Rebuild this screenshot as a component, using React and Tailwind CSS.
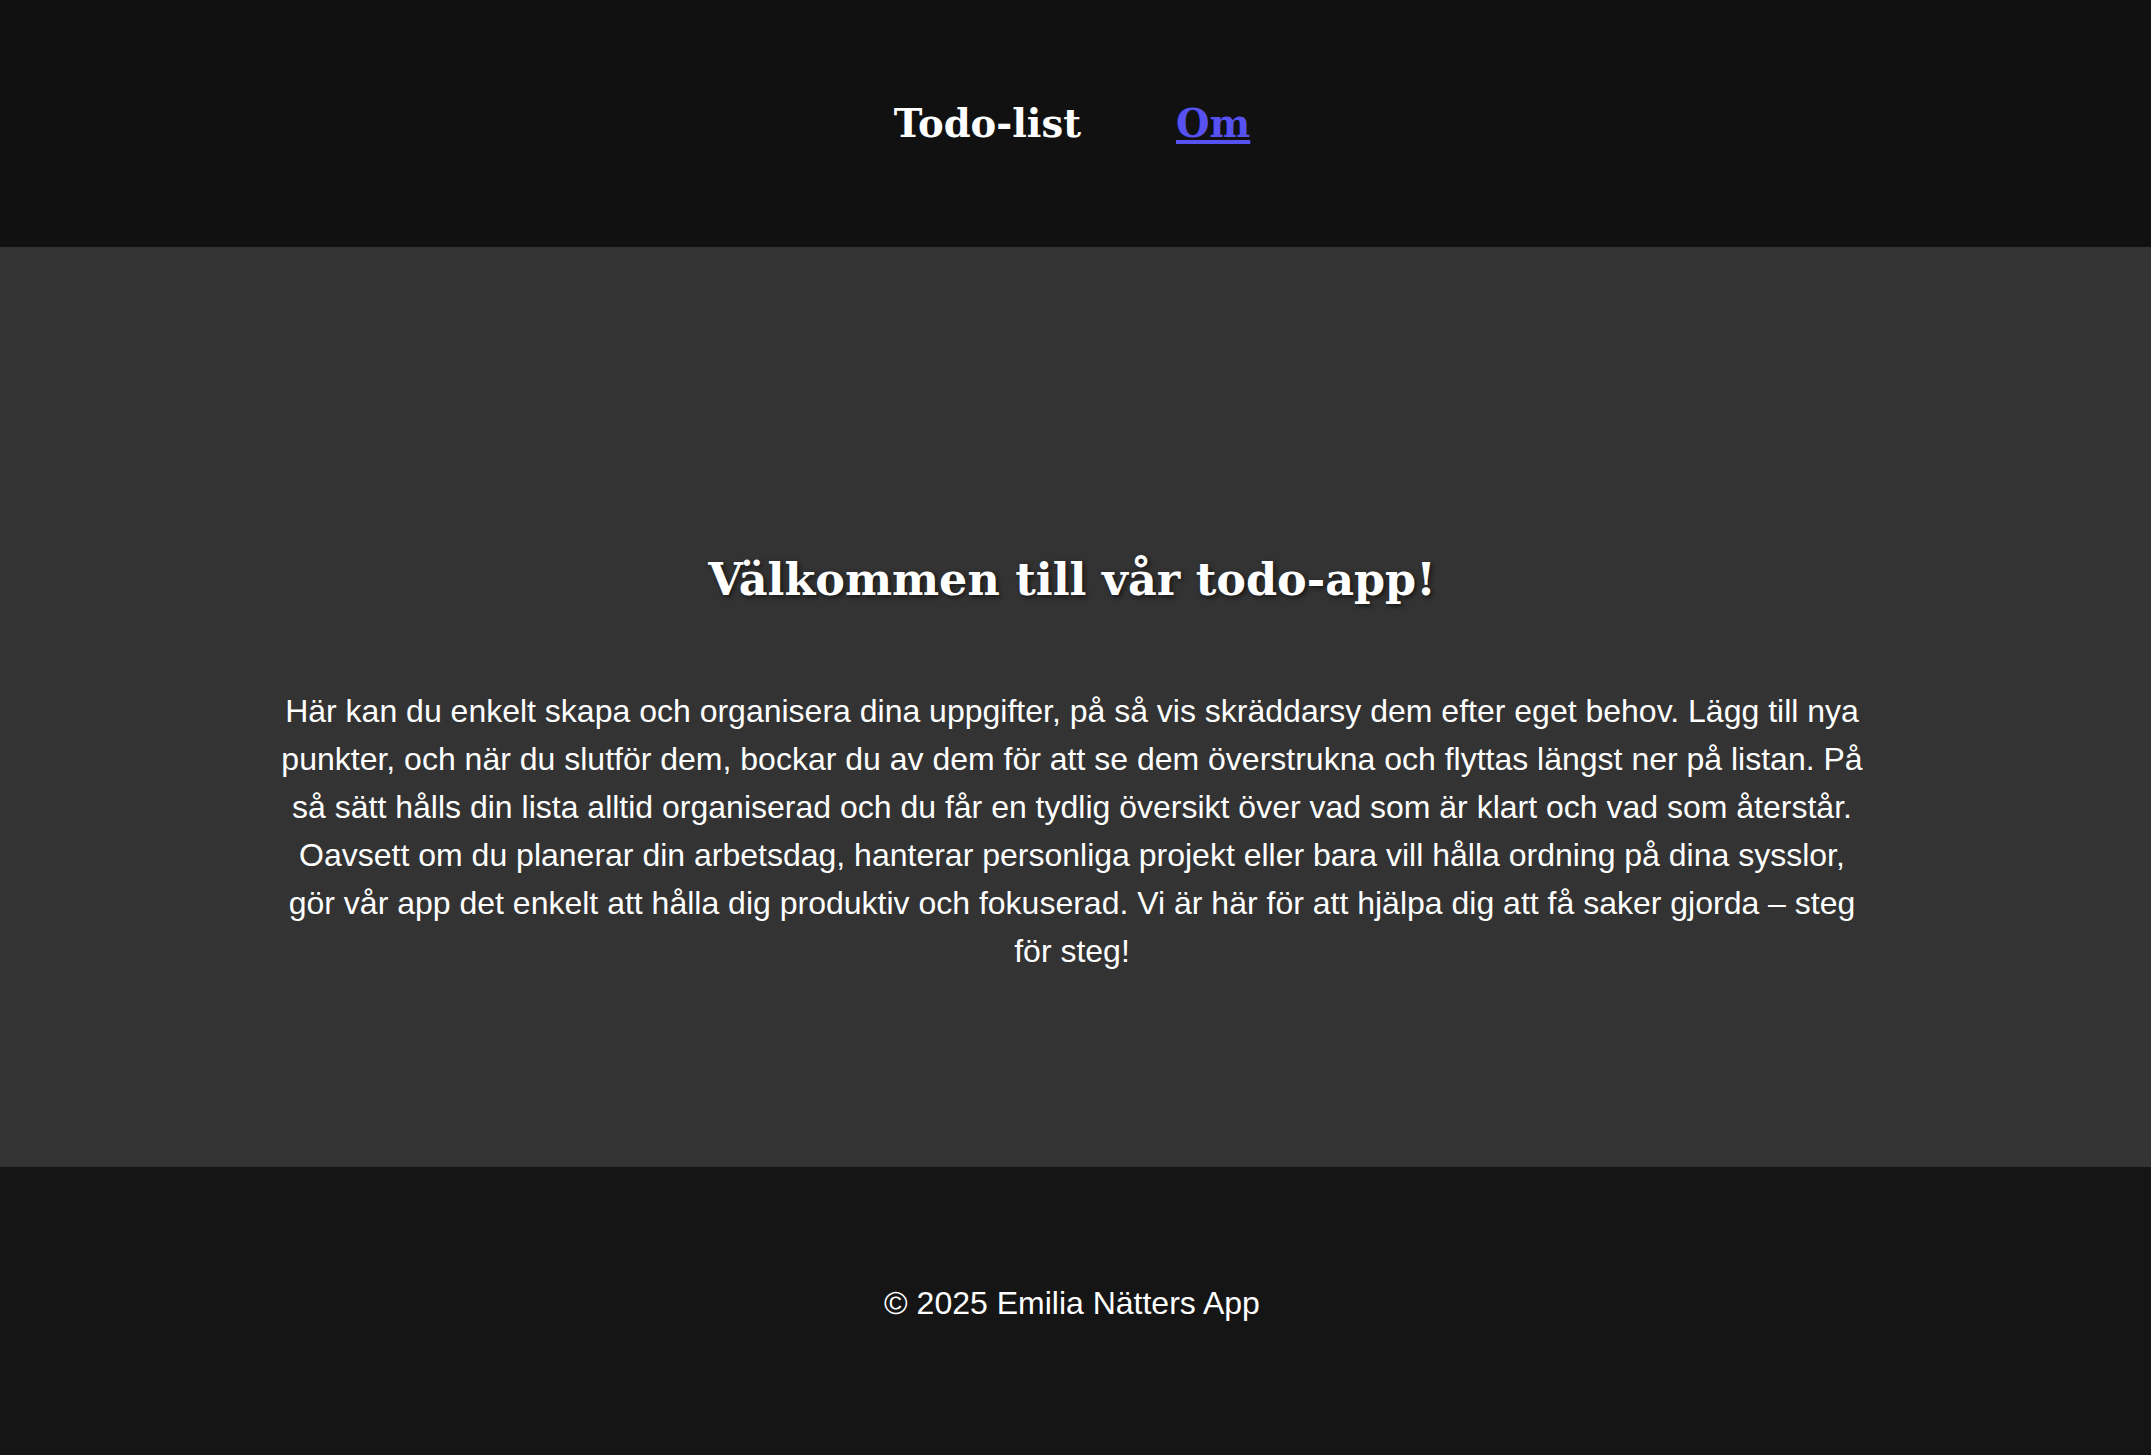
export default function App() {
  return (
    <div className="min-h-screen flex flex-col font-['Liberation_Sans',Arial,sans-serif] text-white">
      <header className="h-[247px] bg-[#111111] flex items-center justify-center gap-[95px] pr-[7px] font-['DejaVu_Serif',Georgia,serif] font-bold">
        <span className="text-[38.5px]">Todo-list</span>
        <a href="#" className="text-[38.5px] text-[#5651f0] underline underline-offset-[3px] decoration-[4px]">Om</a>
      </header>

      <main className="h-[920px] bg-[#333333] flex flex-col items-center pt-[302px] pr-[7px]">
        <h1 className="font-['DejaVu_Serif',Georgia,serif] font-bold text-[44.5px] leading-[60px] [text-shadow:2px_2px_5px_rgba(0,0,0,0.6)]">
          Välkommen till vår todo-app!
        </h1>
        <p className="mt-[78px] w-[1600px] text-center text-[32px] leading-[48px]">
          Här kan du enkelt skapa och organisera dina uppgifter, på så vis skräddarsy dem efter eget behov. Lägg till nya punkter, och när du slutför dem, bockar du av dem för att se dem överstrukna och flyttas längst ner på listan. På så sätt hålls din lista alltid organiserad och du får en tydlig översikt över vad som är klart och vad som återstår. Oavsett om du planerar din arbetsdag, hanterar personliga projekt eller bara vill hålla ordning på dina sysslor, gör vår app det enkelt att hålla dig produktiv och fokuserad. Vi är här för att hjälpa dig att få saker gjorda – steg för steg!
        </p>
      </main>

      <footer className="h-[288px] bg-[#151515] flex items-center justify-center pb-4 pr-[7px]">
        <p className="text-[32px]">© 2025 Emilia Nätters App</p>
      </footer>
    </div>
  )
}
